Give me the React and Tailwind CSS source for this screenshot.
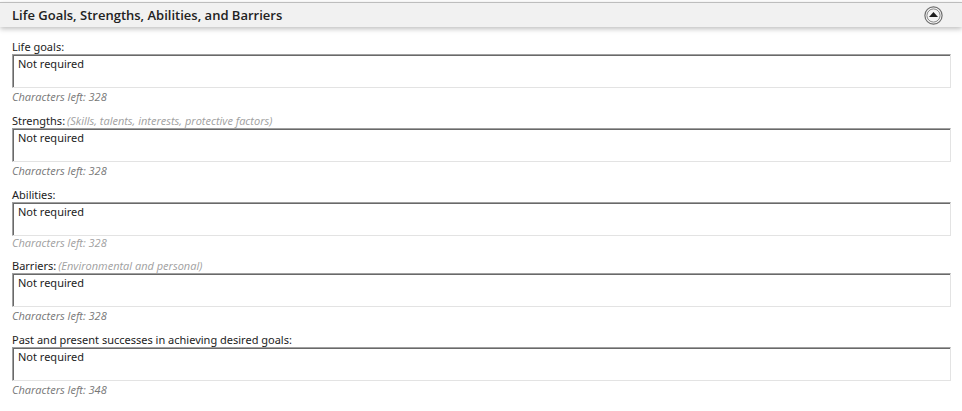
import React, { useState } from "react";

const fields = [
  { id: "goals", label: "Life goals:", max: 340 },
  { id: "strengths", label: "Strengths:", hint: "(Skills, talents, interests, protective factors)", max: 340 },
  { id: "abilities", label: "Abilities:", max: 340, compact: true },
  { id: "barriers", label: "Barriers:", hint: "(Environmental and personal)", max: 340 },
  { id: "successes", label: "Past and present successes in achieving desired goals:", max: 360 },
];

function Field({ id, label, hint, max, compact }) {
  const [value, setValue] = useState("Not required");

  return (
    <div className={compact ? "mb-[9px]" : "mb-[10px]"}>
      <div className="flex gap-[2px]">
        <label htmlFor={id} className="text-[#222222]">{label}</label>
        {hint && <span className="italic font-['Open_Sans',sans-serif] text-[#a0a0a0]">{hint}</span>}
      </div>

      <textarea
        id={id}
        value={value}
        maxLength={max}
        onChange={(e) => setValue(e.target.value)}
        className="block w-full h-[34px] resize-none overflow-hidden bg-white px-[5px] pt-[2px] text-[#222222] outline-none border border-t-[#a0a0a0] border-l-[#a0a0a0] border-r-[#e3e3e3] border-b-[#e3e3e3] shadow-[inset_1px_1px_0_#696969]"
      />

      <p className={compact ? "italic font-['Open_Sans',sans-serif] text-[#a0a0a0]" : "mt-[2px] italic font-['Open_Sans',sans-serif] text-[#777777]"}>
        Characters left: {max - value.length}
      </p>
    </div>
  );
}

function App() {
  const [open, setOpen] = useState(true);

  return (
    <div className="w-full bg-white pt-[2px] font-['Noto_Sans','Open_Sans',sans-serif] text-[11px] leading-[14px]">

      {/* Section header */}
      <div className="flex items-center justify-between h-[25px] border-t border-[#bdbdbd] bg-[#f1f1f1] pl-3 pr-[19px] shadow-[0_2px_5px_rgba(0,0,0,0.25)]">
        <h2 className="font-['Open_Sans',sans-serif] text-[13px] font-semibold text-[#222222]">
          Life Goals, Strengths, Abilities, and Barriers
        </h2>
        <button type="button" aria-label="Toggle section" aria-expanded={open} onClick={() => setOpen(!open)}>
          <svg width="19" height="19" viewBox="0 0 19 19" className="block">
            <circle cx="9.5" cy="9.5" r="8.6" fill="#fafafa" stroke="#6e6e6e" strokeWidth="1.2" />
            <circle cx="9.5" cy="9.5" r="6.6" fill="#f4f4f4" stroke="#858585" strokeWidth="1" />
            <path d="M9.5 6 L14 11 H5 Z" fill="#1e1e1e" />
          </svg>
        </button>
      </div>

      {open && (
        <form className="pt-[13px] pl-3 pr-[11px]">
          {fields.map((f) => (
            <Field key={f.id} {...f} />
          ))}
        </form>
      )}
    </div>
  );
}

export default App;
